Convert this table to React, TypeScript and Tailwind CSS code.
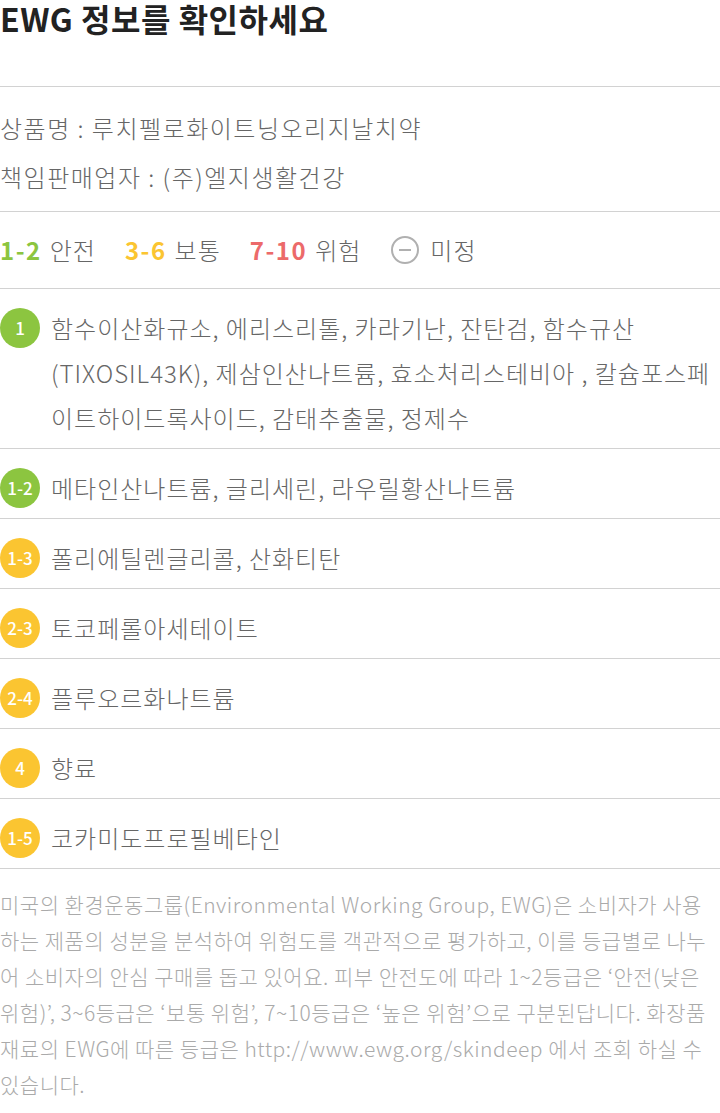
import React from 'react';

type Grade = 'safe' | 'normal';

interface Ingredient {
  grade: string;
  tone: Grade;
  names: React.ReactNode;
}

const ingredients: Ingredient[] = [
  {
    grade: '1',
    tone: 'safe',
    names: (
      <>
        함수이산화규소, 에리스리톨, 카라기난, 잔탄검, 함수규산
        <br />
        (TIXOSIL43K), 제삼인산나트륨, 효소처리스테비아 , 칼슘포스페
        <br />
        이트하이드록사이드, 감태추출물, 정제수
      </>
    ),
  },
  { grade: '1-2', tone: 'safe', names: '메타인산나트륨, 글리세린, 라우릴황산나트륨' },
  { grade: '1-3', tone: 'normal', names: '폴리에틸렌글리콜, 산화티탄' },
  { grade: '2-3', tone: 'normal', names: '토코페롤아세테이트' },
  { grade: '2-4', tone: 'normal', names: '플루오르화나트륨' },
  { grade: '4', tone: 'normal', names: '향료' },
  { grade: '1-5', tone: 'normal', names: '코카미도프로필베타인' },
];

const font = { fontFamily: '"Noto Sans CJK KR", "Noto Sans", sans-serif' };

export default function App() {
  return (
    <div className="w-[720px] bg-white text-[#666]" style={font}>
      {/* 타이틀 */}
      <div className="h-[86px]">
        <h1 className="text-[32px] font-bold leading-[36px] text-[#222] tracking-[0.5px]">
          EWG 정보를 확인하세요
        </h1>
      </div>

      {/* 상품 정보 */}
      <div className="border-t border-[#d2d2d2] pt-[16px] pb-[10px] text-[24px] font-light leading-[49px] tracking-[1.5px]">
        <div>상품명 : 루치펠로화이트닝오리지날치약</div>
        <div>책임판매업자 : (주)엘지생활건강</div>
      </div>

      {/* 범례 */}
      <div className="border-t border-[#d2d2d2] h-[77px] flex items-center text-[24px] font-light">
        <span className="font-bold text-[#8cc540] tracking-[1.5px]">1-2</span>
        <span className="ml-[8px] tracking-[1px]">안전</span>
        <span className="ml-[29px] font-bold text-[#fbc531] tracking-[1.5px]">3-6</span>
        <span className="ml-[8px] tracking-[1px]">보통</span>
        <span className="ml-[29px] font-bold text-[#ec6a6a] tracking-[1.5px]">7-10</span>
        <span className="ml-[8px] tracking-[1px]">위험</span>
        <span className="ml-[30px] w-[28px] h-[28px] rounded-full border-2 border-[#b0b0b0] flex items-center justify-center">
          <span className="w-[12px] h-[2px] bg-[#b0b0b0]" />
        </span>
        <span className="ml-[11px] tracking-[1px]">미정</span>
      </div>

      {/* 성분 목록 */}
      {ingredients.map((item) => (
        <div
          key={item.grade}
          className="border-t border-[#d2d2d2] flex items-start pt-[16px] pb-[8px]"
        >
          <div
            className={`shrink-0 w-[40px] h-[40px] rounded-full flex items-center justify-center text-white text-[17px] font-medium mt-[3px] ${
              item.tone === 'safe' ? 'bg-[#8cc540]' : 'bg-[#fbc531]'
            }`}
          >
            {item.grade}
          </div>
          <div className="ml-[11px] text-[24px] font-light leading-[45px] tracking-[1px]">
            {item.names}
          </div>
        </div>
      ))}

      {/* 안내문 */}
      <p className="border-t border-[#d2d2d2] pt-[17px] pb-[10px] text-[21px] font-light leading-[36px] text-[#aaa] tracking-[0.5px]">
        미국의 환경운동그룹(Environmental Working Group, EWG)은 소비자가 사용
        <br />
        하는 제품의 성분을 분석하여 위험도를 객관적으로 평가하고, 이를 등급별로 나누
        <br />
        어 소비자의 안심 구매를 돕고 있어요. 피부 안전도에 따라 1~2등급은 ‘안전(낮은
        <br />
        위험)’, 3~6등급은 ‘보통 위험’, 7~10등급은 ‘높은 위험’으로 구분된답니다. 화장품
        <br />
        재료의 EWG에 따른 등급은 http://www.ewg.org/skindeep 에서 조회 하실 수
        <br />
        있습니다.
      </p>
    </div>
  );
}
